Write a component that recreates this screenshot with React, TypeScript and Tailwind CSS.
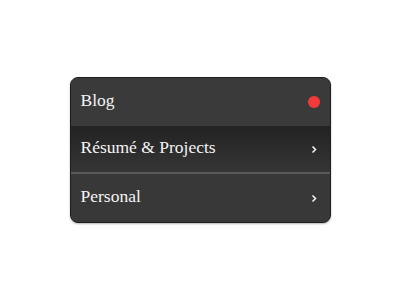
import React from 'react';

const rows = [
  { label: 'Blog', kind: 'dot' },
  { label: 'Résumé & Projects', kind: 'chevron', active: true },
  { label: 'Personal', kind: 'chevron' },
];

function Chevron() {
  return (
    <svg width="6" height="9" viewBox="0 0 6 9" className="text-gray-100">
      <path d="M1.5 1.5 L4.5 4.5 L1.5 7.5" fill="none" stroke="currentColor" strokeWidth="1.5" />
    </svg>
  );
}

export default function App() {
  return (
    <div className="w-[400px] h-[300px] bg-white flex items-start justify-center pt-[77px]">
      <div className="w-[261px] rounded-[8px] overflow-hidden border border-[#1e1e1e] bg-[#3a3a3a] shadow-[0_1px_2px_rgba(0,0,0,0.3)]">
        {rows.map((row, i) => (
          <div
            key={row.label}
            className={
              'h-[48px] flex items-center justify-between pl-[10px] pr-[13px] ' +
              (row.active
                ? 'bg-gradient-to-b from-[#222222] to-[#363636] border-b-2 border-[#5a5a5a]'
                : i === 2
                  ? 'bg-[#383838]'
                  : 'bg-[#3a3a3a]')
            }
          >
            <span className="mb-[3px] text-[#f4f4f4] text-[17.5px] font-['Liberation_Serif',serif]">{row.label}</span>
            {row.kind === 'dot' ? (
              <span className="w-[12px] h-[12px] rounded-full bg-[#f23a3a] mr-[-3px]" />
            ) : (
              <Chevron />
            )}
          </div>
        ))}
      </div>
    </div>
  );
}
